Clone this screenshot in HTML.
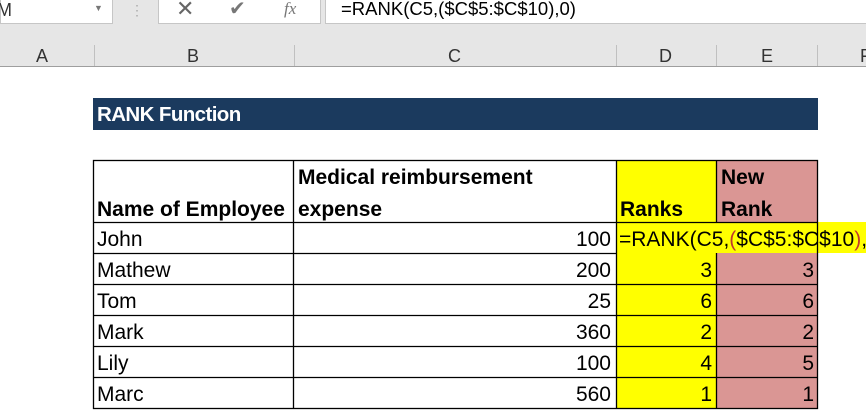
<!DOCTYPE html>
<html><head><style>
body{margin:0;width:866px;height:415px;overflow:hidden;background:#fff;font-family:"Liberation Sans",sans-serif;position:relative}
.a{position:absolute}
.t{position:absolute;font-size:21px;line-height:24px;white-space:nowrap;color:#000}
.b{font-weight:bold}
</style></head><body>
<div class="a" style="left:0;top:0;width:866px;height:67px;background:#e6e6e6"></div>
<div class="a" style="left:0;top:0;width:111px;height:23px;background:#fff;border:1px solid #c6c6c6;border-top:none"></div>
<div class="t" style="left:-3px;top:-2px;font-size:18px;color:#333">M</div>
<div class="t" style="left:94px;top:-4px;font-size:9px;color:#777">▼</div>
<div class="t" style="left:130px;top:-2px;font-size:14px;color:#aaa">⋮</div>
<div class="a" style="left:158px;top:0;width:161px;height:23px;background:#fff;border:1px solid #c6c6c6;border-top:none"></div>
<div class="t" style="left:176px;top:-3px;font-size:22px;color:#666">✕</div>
<div class="t" style="left:229px;top:-3px;font-size:20px;color:#777">✔</div>
<div class="t" style="left:284px;top:-3px;font-size:17px;color:#777;font-family:'Liberation Serif',serif;font-style:italic">fx</div>
<div class="a" style="left:325px;top:0;width:541px;height:23px;background:#fff;border:1px solid #c6c6c6;border-top:none"></div>
<div class="t" style="left:341px;top:-3px;font-size:18.5px">=RANK(C5,($C$5:$C$10),0)</div>
<div class="a" style="left:0;top:66px;width:866px;height:1px;background:#9e9e9e"></div>
<div class="a" style="left:94px;top:45px;width:1px;height:21px;background:#c0c0c0"></div>
<div class="a" style="left:294px;top:45px;width:1px;height:21px;background:#c0c0c0"></div>
<div class="a" style="left:616px;top:45px;width:1px;height:21px;background:#c0c0c0"></div>
<div class="a" style="left:716px;top:45px;width:1px;height:21px;background:#c0c0c0"></div>
<div class="a" style="left:817px;top:45px;width:1px;height:21px;background:#c0c0c0"></div>
<div class="t" style="left:36px;top:44px;font-size:18px;color:#333">A</div>
<div class="t" style="left:187px;top:44px;font-size:18px;color:#333">B</div>
<div class="t" style="left:448px;top:44px;font-size:18px;color:#333">C</div>
<div class="t" style="left:659px;top:44px;font-size:18px;color:#333">D</div>
<div class="t" style="left:761px;top:44px;font-size:18px;color:#333">E</div>
<div class="t" style="left:860px;top:44px;font-size:18px;color:#333">F</div>

<div class="a" style="left:93px;top:98px;width:725px;height:32px;background:#1b3a5e"></div>
<div class="t b" style="left:97px;top:103px;color:#fff;font-size:20.5px;letter-spacing:-0.6px">RANK Function</div>

<div class="a" style="left:616px;top:160px;width:100px;height:249px;background:#ffff00"></div>
<div class="a" style="left:716px;top:160px;width:102px;height:249px;background:#da9694"></div>
<div class="a" style="left:616px;top:222px;width:250px;height:31px;background:#ffff00"></div>

<svg class="a" style="left:0;top:0" width="866" height="415">
<g stroke="#000" stroke-width="1.3" fill="none">
<rect x="93.5" y="160.5" width="724" height="248"/>
<line x1="293.5" y1="160" x2="293.5" y2="409"/>
<line x1="616.5" y1="160" x2="616.5" y2="409"/>
<line x1="716.5" y1="160" x2="716.5" y2="222"/>
<line x1="716.5" y1="253" x2="716.5" y2="409"/>
<line x1="93" y1="222.5" x2="818" y2="222.5"/>
<line x1="93" y1="253.5" x2="616" y2="253.5"/>
<line x1="93" y1="284.5" x2="818" y2="284.5"/>
<line x1="93" y1="315.5" x2="818" y2="315.5"/>
<line x1="93" y1="346.5" x2="818" y2="346.5"/>
<line x1="93" y1="377.5" x2="818" y2="377.5"/>
</g></svg>

<div class="t b" style="left:298px;top:166px">Medical reimbursement</div>
<div class="t b" style="left:97px;top:198px">Name of Employee</div>
<div class="t b" style="left:298px;top:198px">expense</div>
<div class="t b" style="left:620px;top:198px">Ranks</div>
<div class="t b" style="left:721px;top:166px">New</div>
<div class="t b" style="left:721px;top:198px">Rank</div>

<div class="t" style="left:97px;top:228px">John</div>
<div class="t" style="left:97px;top:259px">Mathew</div>
<div class="t" style="left:97px;top:290px">Tom</div>
<div class="t" style="left:97px;top:321px">Mark</div>
<div class="t" style="left:97px;top:352px">Lily</div>
<div class="t" style="left:97px;top:383px">Marc</div>

<div class="t" style="right:255px;top:228px">100</div>
<div class="t" style="right:255px;top:259px">200</div>
<div class="t" style="right:255px;top:290px">25</div>
<div class="t" style="right:255px;top:321px">360</div>
<div class="t" style="right:255px;top:352px">100</div>
<div class="t" style="right:255px;top:383px">560</div>

<div class="t" style="left:619px;top:228px">=RANK(C5,<span style="color:#c0392b">(</span>$C$5:$C$10<span style="color:#c0392b">)</span>,0)</div>

<div class="t" style="right:154px;top:259px">3</div>
<div class="t" style="right:154px;top:290px">6</div>
<div class="t" style="right:154px;top:321px">2</div>
<div class="t" style="right:154px;top:352px">4</div>
<div class="t" style="right:154px;top:383px">1</div>
<div class="t" style="right:52px;top:259px">3</div>
<div class="t" style="right:52px;top:290px">6</div>
<div class="t" style="right:52px;top:321px">2</div>
<div class="t" style="right:52px;top:352px">5</div>
<div class="t" style="right:52px;top:383px">1</div>
</body></html>
